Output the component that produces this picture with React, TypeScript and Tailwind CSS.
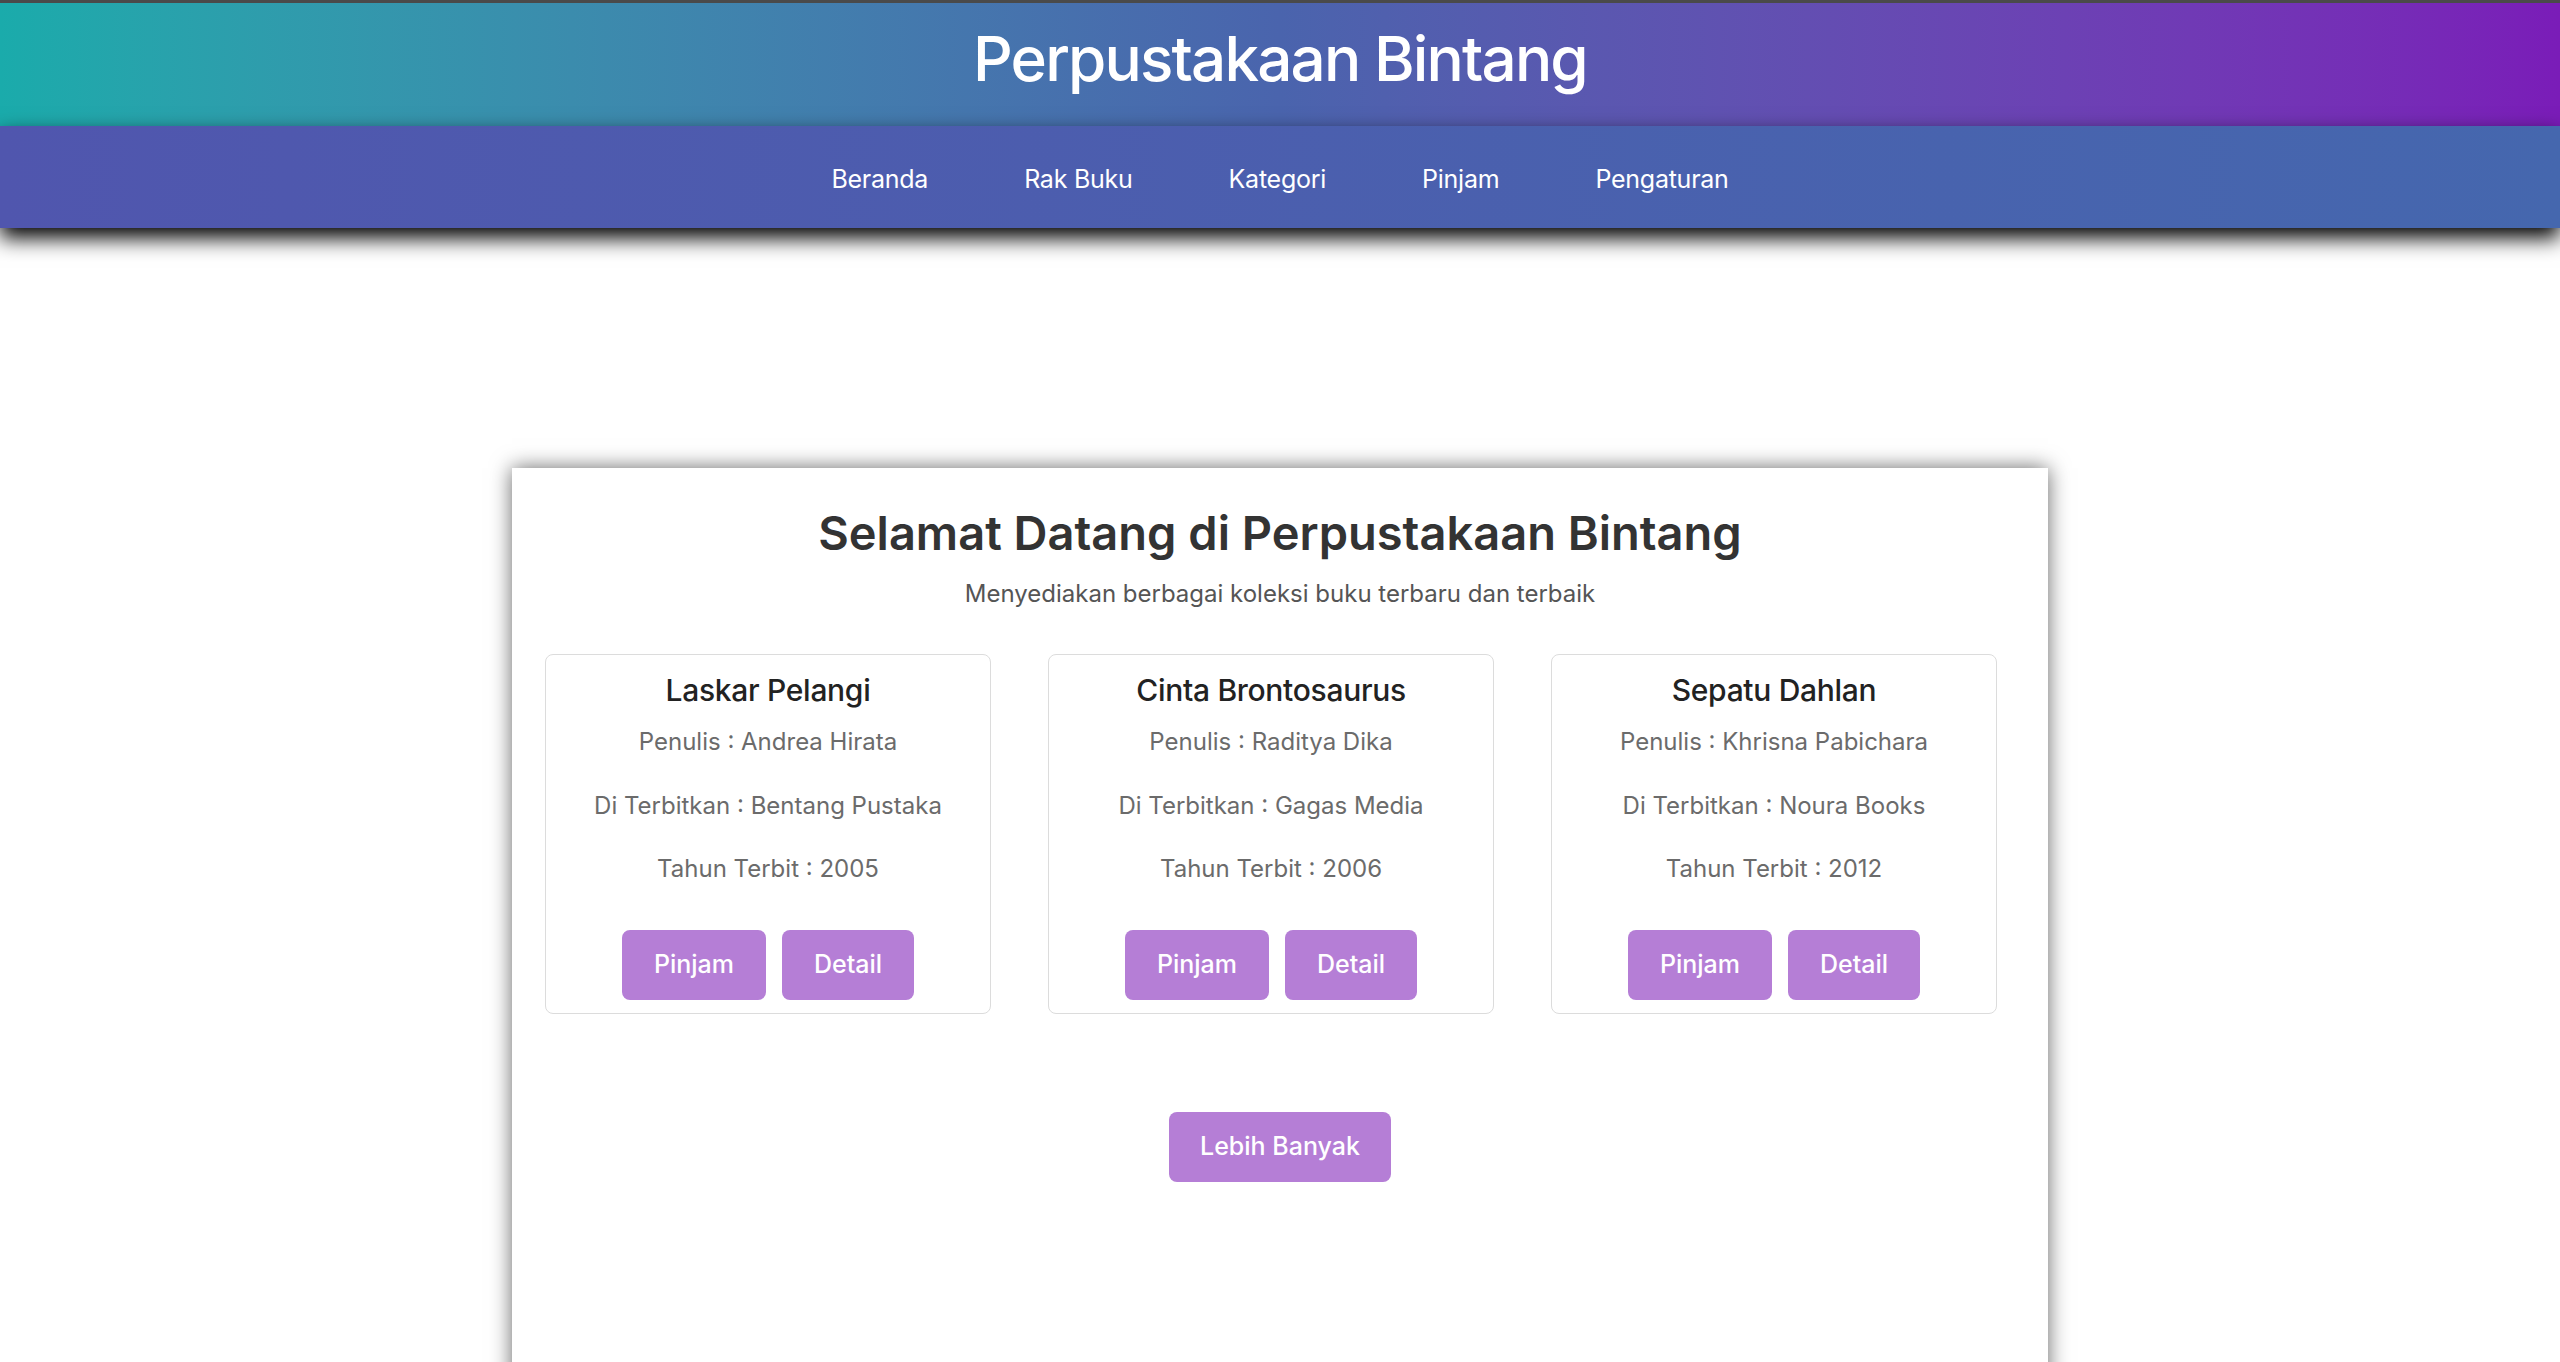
import React from 'react';

interface Book {
  title: string;
  author: string;
  publisher: string;
  year: number;
}

const books: Book[] = [
  { title: 'Laskar Pelangi', author: 'Andrea Hirata', publisher: 'Bentang Pustaka', year: 2005 },
  { title: 'Cinta Brontosaurus', author: 'Raditya Dika', publisher: 'Gagas Media', year: 2006 },
  { title: 'Sepatu Dahlan', author: 'Khrisna Pabichara', publisher: 'Noura Books', year: 2012 },
];

const navLinks = ['Beranda', 'Rak Buku', 'Kategori', 'Pinjam', 'Pengaturan'];

const BookCard: React.FC<{ book: Book }> = ({ book }) => (
  <div className="w-[446px] h-[360px] border border-[#dcdcdc] rounded-[8px] bg-white flex flex-col items-center pt-[17px]">
    <h3 className="text-[30px] leading-[36px] font-medium text-[#222] tracking-[-0.01em]">{book.title}</h3>
    <p className="mt-[19px] text-[24px] leading-[29px] text-[#6b6b6b]">Penulis : {book.author}</p>
    <p className="mt-[35px] text-[24px] leading-[29px] text-[#6b6b6b]">Di Terbitkan : {book.publisher}</p>
    <p className="mt-[34px] text-[24px] leading-[29px] text-[#6b6b6b]">Tahun Terbit : {book.year}</p>
    <div className="mt-[47px] flex gap-[16px]">
      <button className="h-[70px] px-[32px] rounded-[8px] bg-[#b57ed6] text-white text-[25px] font-medium">
        Pinjam
      </button>
      <button className="h-[70px] px-[32px] rounded-[8px] bg-[#b57ed6] text-white text-[25px] font-medium">
        Detail
      </button>
    </div>
  </div>
);

export default function App() {
  return (
    <div className="min-h-screen bg-white font-['Inter','Liberation_Sans',sans-serif] overflow-hidden">
      {/* top strip */}
      <div className="h-[3px] bg-[#4a4a4a]" />

      {/* header */}
      <header className="h-[123px] bg-gradient-to-r from-[#1aabab] via-[#4a64ad] to-[#7a1cb8] flex justify-center pt-[18px]">
        <h1 className="text-[62px] leading-[75px] font-medium tracking-[-0.03em] text-white">Perpustakaan Bintang</h1>
      </header>

      {/* nav */}
      <nav className="relative z-10 h-[102px] bg-gradient-to-r from-[#5056ae] to-[#4567ae] flex justify-center items-center gap-[96px] pt-[5px] shadow-[0_10px_20px_#000]">
        {navLinks.map((link) => (
          <a key={link} className="text-[25px] tracking-[-0.01em] text-white cursor-pointer">
            {link}
          </a>
        ))}
      </nav>

      {/* main card */}
      <main className="pt-[240px]">
        <div className="mx-auto w-[1536px] min-h-[1000px] bg-white shadow-[0_0_20px_rgba(0,0,0,0.6)] flex flex-col items-center pt-[37px]">
          <h2 className="text-[47px] leading-[56px] font-semibold text-[#333]">
            Selamat Datang di Perpustakaan Bintang
          </h2>
          <p className="mt-[18px] text-[24px] leading-[29px] text-[#555]">
            Menyediakan berbagai koleksi buku terbaru dan terbaik
          </p>

          <div className="self-stretch mt-[46px] flex gap-[57px] pl-[33px]">
            {books.map((b) => (
              <BookCard key={b.title} book={b} />
            ))}
          </div>

          <button className="mt-[98px] h-[70px] px-[31px] rounded-[8px] bg-[#b57ed6] text-white text-[25px] font-medium">
            Lebih Banyak
          </button>
        </div>
      </main>
    </div>
  );
}
